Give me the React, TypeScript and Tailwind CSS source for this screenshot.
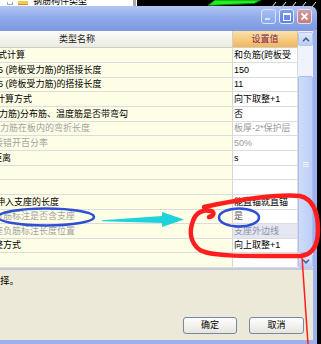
import React from "react"

type Row = {
    label: string
    shift: string
    value: string
    h: string
    dim?: boolean
    valueText?: string
    valueBg?: string
}

const rows: Row[] = [
    { label: "式计算", shift: "-ml-[2px]", value: "和负筋(跨板受", h: "h-[15px]" },
    { label: "5 (跨板受力筋)的搭接长度", shift: "-ml-[2px]", value: "150", h: "h-[15px]" },
    { label: "5 (跨板受力筋)的搭接长度", shift: "-ml-[2px]", value: "11", h: "h-[14px]" },
    { label: "计算方式", shift: "-ml-[4px]", value: "向下取整+1", h: "h-[15px]" },
    { label: "力筋)分布筋、温度筋是否带弯勾", shift: "-ml-[1px]", value: "否", h: "h-[15px]" },
    { label: "力筋在板内的弯折长度", shift: "ml-0", value: "板厚-2*保护层", h: "h-[14px]", dim: true, valueText: "text-[#9a9a9a]" },
    { label: "接错开百分率", shift: "-ml-[6px]", value: "50%", h: "h-[15px]", dim: true, valueText: "text-[#9a9a9a]" },
    { label: "距离", shift: "-ml-[7px]", value: "s", h: "h-[15px]" },
    { label: "", shift: "ml-0", value: "", h: "h-[14px]" },
    { label: "", shift: "ml-0", value: "", h: "h-[15px]" },
    { label: "伸入支座的长度", shift: "-ml-[4px]", value: "能直锚就直锚", h: "h-[15px]" },
    { label: "负筋标注是否含支座", shift: "-ml-[6px]", value: "是", h: "h-[14px]", dim: true, valueText: "text-[#555]" },
    {
        label: "座负筋标注长度位置",
        shift: "-ml-[6px]",
        value: "支座外边线",
        h: "h-[15px]",
        dim: true,
        valueText: "text-[#8d93a8]",
        valueBg: "bg-[#e4e7f1]",
    },
    { label: "整方式", shift: "-ml-[6px]", value: "向上取整+1", h: "h-[14px]" },
    { label: "", shift: "ml-0", value: "", h: "h-[15px]" },
]

function Chevron({ up }: { up?: boolean }) {
    return (
        <svg width="8" height="5" viewBox="0 0 8 5">
            <path
                d={up ? "M1 4.2 L4 1.2 L7 4.2" : "M1 0.8 L4 3.8 L7 0.8"}
                fill="none"
                stroke="#4d6185"
                strokeWidth="1.6"
            />
        </svg>
    )
}

function Scrollbar() {
    return (
        <div className="w-[15px] h-full flex flex-col bg-[#f0f3fb]">
            <div className="h-[14px] mt-[1px] flex items-center justify-center rounded-[2px] border border-[#b5c7f1] bg-linear-to-b from-[#e1e9fc] to-[#bccdf5]">
                <Chevron up />
            </div>
            <div className="flex-1 flex flex-col pt-[30px] pb-[1px]">
                <div className="flex-1 flex flex-col items-center justify-center gap-[1px] rounded-[2px] border border-[#a8bdf0] bg-linear-to-r from-[#cfdcfb] to-[#bccdf7]">
                    <div className="w-[6px] h-[1px] bg-[#eef3ff]" />
                    <div className="w-[6px] h-[1px] bg-[#eef3ff]" />
                    <div className="w-[6px] h-[1px] bg-[#eef3ff]" />
                </div>
            </div>
            <div className="h-[14px] flex items-center justify-center rounded-[2px] border border-[#b5c7f1] bg-linear-to-b from-[#e1e9fc] to-[#bccdf5]">
                <Chevron />
            </div>
        </div>
    )
}

function Overlay() {
    return (
        <svg className="absolute inset-0 pointer-events-none" width="321" height="344" viewBox="0 0 321 344">
            <polygon points="102,220.3 162,216 162,212 184,219.5 162,227 162,223 102,221.2" fill="#1fd3dc" />
            <ellipse cx="46" cy="217" rx="48" ry="8.5" fill="none" stroke="#2d4fd6" strokeWidth="2.5" />
            <ellipse cx="239" cy="217.5" rx="20" ry="9" fill="none" stroke="#2d4fd6" strokeWidth="2.5" />
            <path
                d="M209 217 C214 216 215 212 211 211 C204 209 196 212 193 221 C189 231 190 243 200 250 C212 257 250 256 300 256 C312 255 318 246 318 230 C318 212 313 199 300 196 C280 194 240 199 204 207"
                fill="none"
                stroke="#ff1e1e"
                strokeWidth="4.5"
                strokeLinecap="round"
                strokeLinejoin="round"
            />
            <path d="M302 257 L308 344" stroke="#ff1e1e" strokeWidth="1.5" />
        </svg>
    )
}

export default function App() {
    return (
        <div className="relative w-[321px] h-[344px] overflow-hidden bg-black text-[9px] leading-none text-black font-['Liberation_Sans','Noto_Sans_CJK_SC',sans-serif]">
            <svg className="absolute inset-0" width="321" height="344">
                <defs>
                    <pattern id="hatch" width="10" height="8" patternUnits="userSpaceOnUse">
                        <path d="M2 7 L6 2" stroke="#e8e8e8" strokeWidth="1" />
                    </pattern>
                </defs>
                <rect x="272" y="0" width="49" height="344" fill="url(#hatch)" />
            </svg>

            <div className="relative flex flex-col">
                {/* desktop strip above the dialog */}
                <div className="h-[6px] flex">
                    <div className="w-[133px] bg-white overflow-hidden flex items-end pb-[1px]">
                        <div className="ml-[7px] w-[6px] h-[3px] border border-t-0 border-[#9aa6b8]" />
                        <div className="ml-[5px] w-[10px] h-[4px] bg-[#f2c94c] border-b border-[#c99a22]" />
                        <span className="ml-[5px] whitespace-nowrap -mb-[1px]">钢筋构件类型</span>
                    </div>
                    <div className="w-[3px] bg-[#a7a6aa]" />
                    <div className="w-[1px] bg-white" />
                    <div className="flex-1">
                        <svg className="ml-[70px]" width="56" height="6" viewBox="0 0 56 6">
                            <polygon points="1,5.5 8,0 54,0 47,3.5 12,5" fill="#22ee22" stroke="#0b7a0b" strokeWidth="1" />
                        </svg>
                    </div>
                </div>

                {/* dialog window */}
                <div className="w-[317px] h-[338px] flex flex-col rounded-tr-[7px] overflow-hidden">
                    <div className="h-[24px] flex justify-end items-start gap-[3px] pt-[3px] pr-[5px] bg-linear-to-b from-[#b3c5f2] via-[#8fa9e9] to-[#7d99e1]">
                        <div className="w-[15px] h-[15px] rounded-[3px] border border-[#dbe4fb] bg-linear-to-b from-[#a9c0f6] to-[#88a6ec] flex items-end pl-[3px] pb-[3px]">
                            <div className="w-[5px] h-[2px] bg-[#dbe4fb]" />
                        </div>
                        <div className="w-[15px] h-[15px] rounded-[3px] border border-[#e6ecfc] bg-linear-to-b from-[#7c9df0] to-[#5a80e0] flex items-center justify-center">
                            <div className="w-[8px] h-[8px] border border-t-2 border-white" />
                        </div>
                        <div className="w-[15px] h-[15px] rounded-[3px] border border-[#eedcdf] bg-linear-to-b from-[#d49aa2] to-[#bf7c86] flex items-center justify-center">
                            <svg width="9" height="9" viewBox="0 0 9 9">
                                <path d="M1.5 1.5 L7.5 7.5 M7.5 1.5 L1.5 7.5" stroke="#fff" strokeWidth="1.8" />
                            </svg>
                        </div>
                    </div>

                    <div className="flex-1 flex flex-col border-r-4 border-b-4 border-[#9db1ec]">
                        {/* property grid */}
                        <div className="h-[240px] flex border-t border-b-2 border-t-[#7f98dc] border-b-[#c5cbd8] bg-white">
                            <div className="w-[298px] flex flex-col">
                                <div className="h-[17px] flex border-b border-[#cfcfc5]">
                                    <div className="w-[233px] flex items-center pl-[59px] border-r border-[#d0d0c8] bg-linear-to-b from-[#fcfcfa] to-[#ebeae2] text-[#222]">
                                        类型名称
                                    </div>
                                    <div className="w-[65px] flex items-center justify-center border-r border-[#e0c08a] bg-linear-to-b from-[#fbe2aa] to-[#f1b65a] text-[#80205a]">
                                        设置值
                                    </div>
                                </div>
                                {rows.map((r, i) => (
                                    <div key={i} className={`flex ${r.h} border-b border-[#dcdcdc]`}>
                                        <div className="w-[233px] flex items-center overflow-hidden border-r border-[#d6d6d6] bg-[#fefee6]">
                                            <span
                                                className={`whitespace-nowrap ${r.shift} ${r.dim ? "text-[#a3a3a3]" : "text-black"}`}
                                            >
                                                {r.label}
                                            </span>
                                        </div>
                                        <div
                                            className={`w-[65px] flex items-center overflow-hidden pl-[1px] border-r border-[#dcdcdc] ${r.valueBg ?? "bg-white"}`}
                                        >
                                            <span className={`whitespace-nowrap ${r.valueText ?? "text-black"}`}>{r.value}</span>
                                        </div>
                                    </div>
                                ))}
                            </div>
                            <Scrollbar />
                        </div>

                        {/* description and buttons */}
                        <div className="flex-1 flex flex-col bg-[#ece9d8]">
                            <p className="pt-[6px] text-[9.5px]">择。</p>
                            <div className="flex-1" />
                            <div className="flex justify-end gap-[12px] pr-[9px] pb-[6px]">
                                <button className="w-[54px] h-[17px] rounded-[3px] border border-[#7688a8] bg-linear-to-b from-[#ffffff] to-[#e6e4dc] text-[9px]">
                                    确定
                                </button>
                                <button className="w-[55px] h-[17px] rounded-[3px] border border-[#7688a8] bg-linear-to-b from-[#ffffff] to-[#e6e4dc] text-[9px]">
                                    取消
                                </button>
                            </div>
                        </div>
                    </div>
                </div>
            </div>

            <Overlay />
        </div>
    )
}
